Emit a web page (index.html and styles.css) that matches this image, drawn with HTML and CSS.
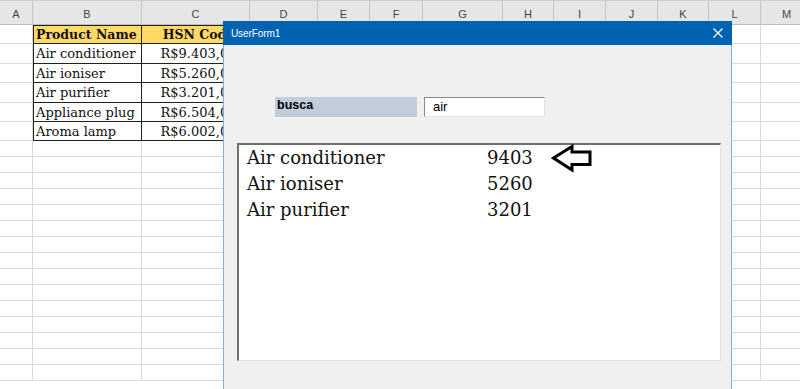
FILE: index.html
```html
<!DOCTYPE html>
<html lang="pt">
<head>
<meta charset="utf-8">
<title>UserForm1</title>
<link rel="stylesheet" href="styles.css">
</head>
<body>
<div class="sheet">
  <div class="row head">
    <i class="ch">A</i><i class="ch">B</i><i class="ch">C</i><i class="ch">D</i><i class="ch">E</i><i class="ch">F</i><i class="ch">G</i><i class="ch">H</i><i class="ch">I</i><i class="ch">J</i><i class="ch">K</i><i class="ch">L</i><i class="ch">M</i>
  </div>
  <div class="row">
    <i class="c"></i><i class="c t tb th first">Product Name</i><i class="c t tc th first">HSN Code</i><i class="c"></i><i class="c"></i><i class="c"></i><i class="c"></i><i class="c"></i><i class="c"></i><i class="c"></i><i class="c"></i><i class="c"></i><i class="c"></i>
  </div>
  <div class="row">
    <i class="c"></i><i class="c t tb">Air conditioner</i><i class="c t tc">R$9.403,00</i><i class="c"></i><i class="c"></i><i class="c"></i><i class="c"></i><i class="c"></i><i class="c"></i><i class="c"></i><i class="c"></i><i class="c"></i><i class="c"></i>
  </div>
  <div class="row">
    <i class="c"></i><i class="c t tb">Air ioniser</i><i class="c t tc">R$5.260,00</i><i class="c"></i><i class="c"></i><i class="c"></i><i class="c"></i><i class="c"></i><i class="c"></i><i class="c"></i><i class="c"></i><i class="c"></i><i class="c"></i>
  </div>
  <div class="row">
    <i class="c"></i><i class="c t tb">Air purifier</i><i class="c t tc">R$3.201,00</i><i class="c"></i><i class="c"></i><i class="c"></i><i class="c"></i><i class="c"></i><i class="c"></i><i class="c"></i><i class="c"></i><i class="c"></i><i class="c"></i>
  </div>
  <div class="row">
    <i class="c"></i><i class="c t tb">Appliance plug</i><i class="c t tc">R$6.504,00</i><i class="c"></i><i class="c"></i><i class="c"></i><i class="c"></i><i class="c"></i><i class="c"></i><i class="c"></i><i class="c"></i><i class="c"></i><i class="c"></i>
  </div>
  <div class="row">
    <i class="c"></i><i class="c t tb">Aroma lamp</i><i class="c t tc">R$6.002,00</i><i class="c"></i><i class="c"></i><i class="c"></i><i class="c"></i><i class="c"></i><i class="c"></i><i class="c"></i><i class="c"></i><i class="c"></i><i class="c"></i>
  </div>
  <div class="row"><i class="c"></i><i class="c"></i><i class="c"></i><i class="c"></i><i class="c"></i><i class="c"></i><i class="c"></i><i class="c"></i><i class="c"></i><i class="c"></i><i class="c"></i><i class="c"></i><i class="c"></i></div>
  <div class="row"><i class="c"></i><i class="c"></i><i class="c"></i><i class="c"></i><i class="c"></i><i class="c"></i><i class="c"></i><i class="c"></i><i class="c"></i><i class="c"></i><i class="c"></i><i class="c"></i><i class="c"></i></div>
  <div class="row"><i class="c"></i><i class="c"></i><i class="c"></i><i class="c"></i><i class="c"></i><i class="c"></i><i class="c"></i><i class="c"></i><i class="c"></i><i class="c"></i><i class="c"></i><i class="c"></i><i class="c"></i></div>
  <div class="row"><i class="c"></i><i class="c"></i><i class="c"></i><i class="c"></i><i class="c"></i><i class="c"></i><i class="c"></i><i class="c"></i><i class="c"></i><i class="c"></i><i class="c"></i><i class="c"></i><i class="c"></i></div>
  <div class="row"><i class="c"></i><i class="c"></i><i class="c"></i><i class="c"></i><i class="c"></i><i class="c"></i><i class="c"></i><i class="c"></i><i class="c"></i><i class="c"></i><i class="c"></i><i class="c"></i><i class="c"></i></div>
  <div class="row"><i class="c"></i><i class="c"></i><i class="c"></i><i class="c"></i><i class="c"></i><i class="c"></i><i class="c"></i><i class="c"></i><i class="c"></i><i class="c"></i><i class="c"></i><i class="c"></i><i class="c"></i></div>
  <div class="row"><i class="c"></i><i class="c"></i><i class="c"></i><i class="c"></i><i class="c"></i><i class="c"></i><i class="c"></i><i class="c"></i><i class="c"></i><i class="c"></i><i class="c"></i><i class="c"></i><i class="c"></i></div>
  <div class="row"><i class="c"></i><i class="c"></i><i class="c"></i><i class="c"></i><i class="c"></i><i class="c"></i><i class="c"></i><i class="c"></i><i class="c"></i><i class="c"></i><i class="c"></i><i class="c"></i><i class="c"></i></div>
  <div class="row"><i class="c"></i><i class="c"></i><i class="c"></i><i class="c"></i><i class="c"></i><i class="c"></i><i class="c"></i><i class="c"></i><i class="c"></i><i class="c"></i><i class="c"></i><i class="c"></i><i class="c"></i></div>
  <div class="row"><i class="c"></i><i class="c"></i><i class="c"></i><i class="c"></i><i class="c"></i><i class="c"></i><i class="c"></i><i class="c"></i><i class="c"></i><i class="c"></i><i class="c"></i><i class="c"></i><i class="c"></i></div>
  <div class="row"><i class="c"></i><i class="c"></i><i class="c"></i><i class="c"></i><i class="c"></i><i class="c"></i><i class="c"></i><i class="c"></i><i class="c"></i><i class="c"></i><i class="c"></i><i class="c"></i><i class="c"></i></div>
  <div class="row"><i class="c"></i><i class="c"></i><i class="c"></i><i class="c"></i><i class="c"></i><i class="c"></i><i class="c"></i><i class="c"></i><i class="c"></i><i class="c"></i><i class="c"></i><i class="c"></i><i class="c"></i></div>
  <div class="row"><i class="c"></i><i class="c"></i><i class="c"></i><i class="c"></i><i class="c"></i><i class="c"></i><i class="c"></i><i class="c"></i><i class="c"></i><i class="c"></i><i class="c"></i><i class="c"></i><i class="c"></i></div>
  <div class="row"><i class="c"></i><i class="c"></i><i class="c"></i><i class="c"></i><i class="c"></i><i class="c"></i><i class="c"></i><i class="c"></i><i class="c"></i><i class="c"></i><i class="c"></i><i class="c"></i><i class="c"></i></div>
  <div class="row"><i class="c"></i><i class="c"></i><i class="c"></i><i class="c"></i><i class="c"></i><i class="c"></i><i class="c"></i><i class="c"></i><i class="c"></i><i class="c"></i><i class="c"></i><i class="c"></i><i class="c"></i></div>
</div>

<div class="dialog">
  <div class="titlebar">
    <span class="title">UserForm1</span>
    <svg class="close" width="10" height="10" viewBox="0 0 10 10"><path d="M0.5 0.5L9.5 9.5M9.5 0.5L0.5 9.5" stroke="#fff" stroke-width="1.2" fill="none"/></svg>
  </div>
  <div class="form">
    <div class="search">
      <span class="label">busca</span>
      <span class="input">air</span>
    </div>
    <div class="listbox">
      <div class="item"><span>Air conditioner</span><span>9403</span></div>
      <div class="item"><span>Air ioniser</span><span>5260</span></div>
      <div class="item"><span>Air purifier</span><span>3201</span></div>
      <svg class="arrow" width="42" height="30" viewBox="0 0 42 30"><path d="M2.5 14 L21 2.5 L21 8 L39 8 L39 20.5 L21 20.5 L21 26 Z" fill="none" stroke="#000" stroke-width="3" stroke-linejoin="miter"/></svg>
    </div>
  </div>
</div>
</body>
</html>
```

FILE: styles.css
```css
* { box-sizing: border-box; }

body {
  margin: 0;
  width: 800px;
  height: 389px;
  overflow: hidden;
  position: relative;
  background: #fff;
  font-family: "Liberation Sans", Arial, sans-serif;
}

.sheet {
  display: grid;
  grid-template-columns: 33px 109px 108px 68px 52px 53px 80px 51px 52px 52px 51px 52px 52px;
  grid-template-rows: 25px 19px 20px 19px 20px 19px 19px;
  grid-auto-rows: 16px;
  width: 813px;
}

.row { display: contents; }

.sheet i { font-style: normal; }

.ch {
  background: #e6e6e6;
  border-top: 1px solid #cfcfcf;
  border-right: 1px solid #c4c4c4;
  border-bottom: 1px solid #bdbdbd;
  color: #444;
  font-size: 11px;
  display: flex;
  align-items: center;
  justify-content: center;
  padding-top: 2px;
}

.c {
  border-right: 1px solid #dadada;
  border-bottom: 1px solid #dadada;
  font-family: "DejaVu Serif", "Liberation Serif", serif;
  font-size: 13px;
  color: #111;
  white-space: nowrap;
  overflow: hidden;
  display: flex;
  align-items: center;
}

.t {
  border-right-color: #222;
  border-bottom-color: #222;
}

.tb {
  padding-left: 3px;
  box-shadow: inset 1px 0 0 #222;
}

.tc {
  justify-content: center;
  padding-left: 6px;
}

.th {
  background: #ffd966;
  font-weight: bold;
  font-size: 12.5px;
}

.tb.first { box-shadow: inset 1px 1px 0 #222; }
.tc.first { box-shadow: inset 0 1px 0 #222; }

.dialog {
  position: absolute;
  left: 223px;
  top: 21px;
  width: 509px;
  height: 380px;
  display: flex;
  flex-direction: column;
}

.titlebar {
  height: 24px;
  background: #0063b1;
  color: #fff;
  display: flex;
  align-items: center;
  justify-content: space-between;
  padding: 0 9px 0 8px;
}

.title {
  font-size: 10px;
  letter-spacing: -0.1px;
}

.form {
  flex: 1;
  background: #f0f0f0;
  border-left: 1px solid #86aedb;
  border-right: 1px solid #86aedb;
  padding: 52px 10px 0 13px;
}

.search {
  display: flex;
  gap: 7px;
  margin-left: 38px;
}

.label {
  width: 142px;
  height: 20px;
  background: #c1cddb;
  font-weight: bold;
  font-size: 12.5px;
  line-height: 16px;
  padding-left: 2px;
  color: #000;
}

.input {
  width: 121px;
  height: 20px;
  background: #fff;
  border-style: solid;
  border-width: 1px;
  border-color: #8a8a8a #e3e3e3 #e3e3e3 #8a8a8a;
  font-size: 13px;
  line-height: 18px;
  padding-left: 8px;
  color: #000;
}

.listbox {
  position: relative;
  margin-top: 26px;
  width: 484px;
  height: 218px;
  background: #fff;
  border-style: solid;
  border-width: 2px 1px 1px 2px;
  border-color: #6f6f6f #e6e2e2 #e3e3e3 #6f6f6f;
  padding: 0 0 0 8px;
  font-family: "DejaVu Serif", "Liberation Serif", serif;
  font-size: 18px;
  line-height: 26px;
  color: #111;
}

.item {
  display: grid;
  grid-template-columns: 240px auto;
}

.arrow {
  position: absolute;
  left: 312px;
  top: -1px;
}
```
